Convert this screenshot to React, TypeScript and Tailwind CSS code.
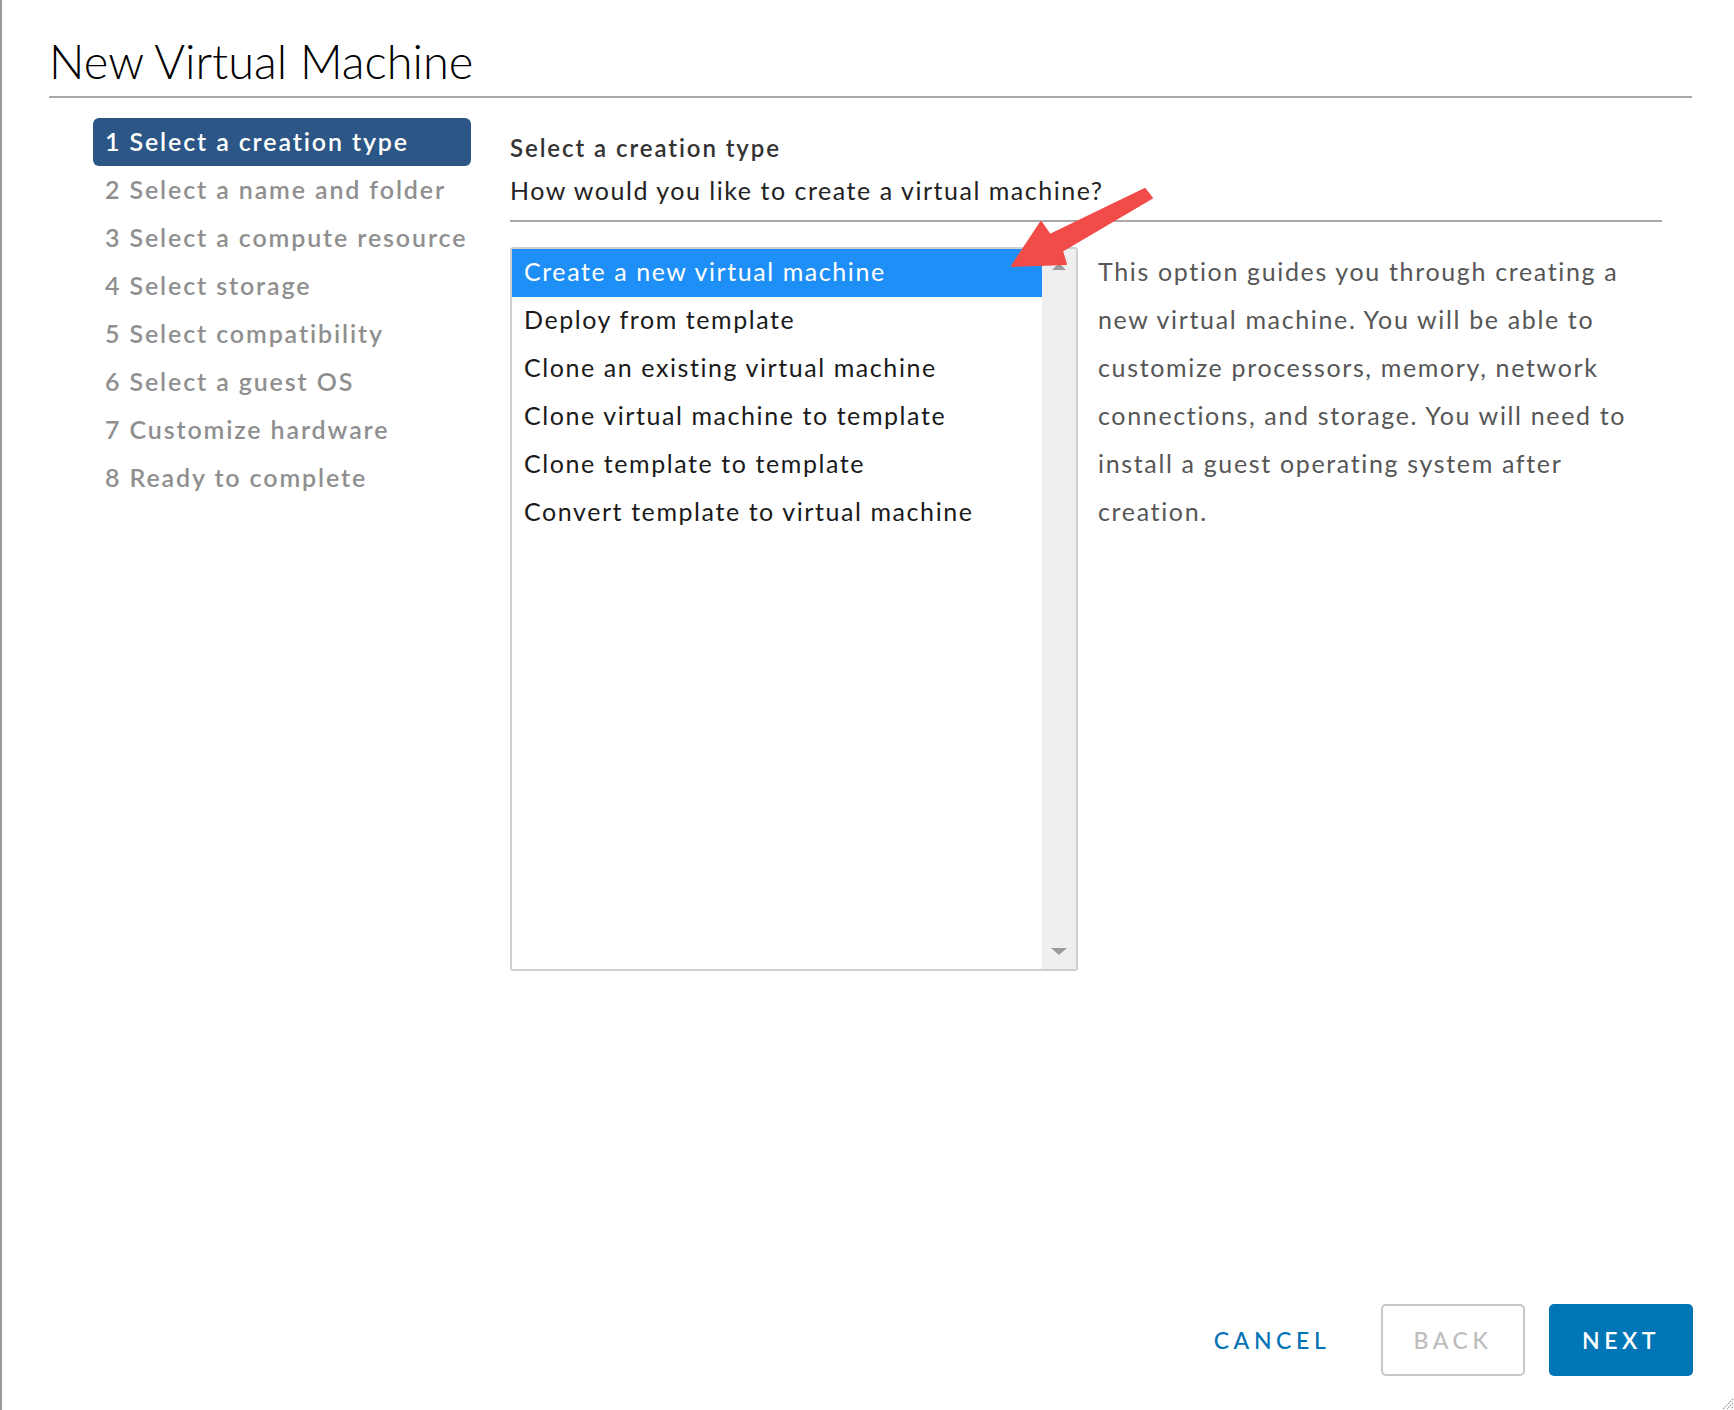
const steps = [
  "Select a creation type",
  "Select a name and folder",
  "Select a compute resource",
  "Select storage",
  "Select compatibility",
  "Select a guest OS",
  "Customize hardware",
  "Ready to complete",
];

const options = [
  "Create a new virtual machine",
  "Deploy from template",
  "Clone an existing virtual machine",
  "Clone virtual machine to template",
  "Clone template to template",
  "Convert template to virtual machine",
];

export default function App() {
  return (
    <div className="relative flex h-[1410px] w-[1734px] flex-col border-l-2 border-[#9a9a9a] bg-white text-[#222] [font-family:Lato,sans-serif]">
      {/* title */}
      <div className="ml-[47px] mr-[42px] border-b-2 border-[#a8a8a8] pb-[7px] pt-[33px]">
        <h1 className="text-[47px] font-light leading-[56px] text-black">New Virtual Machine</h1>
      </div>

      <div className="flex flex-1 pl-[91px] pr-[72px] pt-5">
        {/* steps */}
        <ul className="w-[378px] shrink-0">
          {steps.map((s, i) => (
            <li
              key={s}
              className={`h-12 whitespace-nowrap rounded-[6px] pl-3 text-[25px] font-semibold leading-[46px] tracking-[0.075em] ${
                i === 0 ? "bg-[#2b5685] text-white" : "text-[#8f8f8f]"
              }`}
            >
              {i + 1} {s}
            </li>
          ))}
        </ul>

        <div className="ml-[39px] flex-1">
          <h2 className="mt-4 text-[24px] font-semibold leading-[28px] tracking-[0.08em] text-[#333]">
            Select a creation type
          </h2>
          <p className="mt-[14px] border-b-2 border-[#a8a8a8] pb-[16px] text-[25px] leading-[28px] tracking-[0.061em] text-[#222]">
            How would you like to create a virtual machine?
          </p>

          <div className="mt-[25px] flex">
            <div className="flex h-[724px] w-[568px] shrink-0 rounded-[3px] border-2 border-[#cfcfcf]">
              <ul className="flex-1">
                {options.map((o, i) => (
                  <li
                    key={o}
                    className={`h-12 whitespace-nowrap pl-3 text-[25px] leading-[44px] tracking-[0.063em] ${
                      i === 0 ? "bg-[#1e8ff7] text-white" : "text-[#1a1a1a]"
                    }`}
                  >
                    {o}
                  </li>
                ))}
              </ul>
              <div className="flex w-[34px] flex-col items-center justify-between bg-[#efefef] py-[14px]">
                <div className="h-0 w-0 border-x-[7px] border-b-[7px] border-x-transparent border-b-[#9b9b9b]" />
                <div className="h-0 w-0 border-x-[8px] border-t-[7px] border-x-transparent border-t-[#9b9b9b]" />
              </div>
            </div>

            <p className="ml-5 whitespace-nowrap text-[25px] leading-[48px] tracking-[0.066em] text-[#565656]">
              This option guides you through creating a
              <br />
              new virtual machine. You will be able to
              <br />
              customize processors, memory, network
              <br />
              connections, and storage. You will need to
              <br />
              install a guest operating system after
              <br />
              creation.
            </p>
          </div>
        </div>
      </div>

      {/* footer buttons */}
      <div className="flex items-center justify-end pb-[34px] pr-[41px]">
        <button className="mr-[37px] h-[72px] w-[144px] text-[23px] font-medium tracking-[0.2em] text-[#0072b5]">
          CANCEL
        </button>
        <button className="mr-6 h-[72px] w-[144px] rounded-[5px] border-2 border-[#c8c8c8] text-[23px] font-medium tracking-[0.2em] text-[#bdbdbd]">
          BACK
        </button>
        <button className="h-[72px] w-[144px] rounded-[5px] bg-[#0076b6] text-[23px] font-semibold tracking-[0.2em] text-white">
          NEXT
        </button>
      </div>

      {/* annotation arrow */}
      <svg
        className="pointer-events-none absolute left-[1006px] top-[184px] h-[86px] w-[150px]"
        viewBox="1008 184 150 86"
      >
        <polygon
          points="1012,266 1041,222 1050,235 1145,189 1152,198 1062,251 1066,264"
          fill="#f14b4a"
          strokeLinejoin="round"
          stroke="#f14b4a"
          strokeWidth="2"
        />
      </svg>

      {/* resize grip */}
      <svg className="absolute bottom-0 right-0 h-[14px] w-[14px]" viewBox="0 0 14 14">
        <path d="M13 3 L3 13 M13 7 L7 13 M13 11 L11 13" stroke="#9a9a9a" strokeWidth="1.2" strokeDasharray="1.5 1" />
      </svg>
    </div>
  );
}
